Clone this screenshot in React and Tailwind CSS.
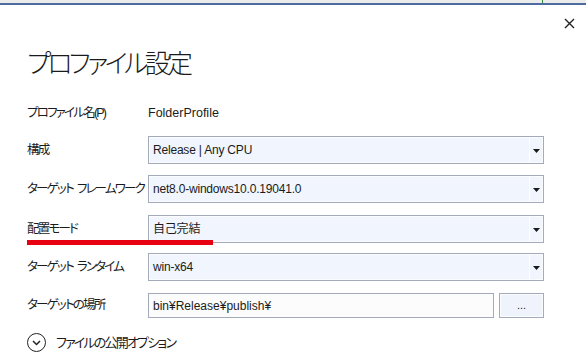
import React from "react";

const jp = "font-['Liberation_Sans','Noto_Sans_CJK_JP',sans-serif] [font-feature-settings:'palt']";

function Arrow() {
  return (
    <svg width="7" height="4" viewBox="0 0 7 4" className="block">
      <path d="M0 0 H7 L3.5 4 Z" fill="#1a1a1a" />
    </svg>
  );
}

function Select({ value }) {
  return (
    <div className="flex h-[28px] w-[396px] items-stretch border border-[#a3abba] bg-[#f1f5fd] shadow-[inset_0_0_0_1px_#fbfcff]">
      <div className="flex flex-1 items-center pl-[4px] text-[12px] tracking-[-0.2px] text-[#1b1b1b]">{value}</div>
      <div className="w-[1px] bg-[#ffffff]" />
      <div className="flex w-[13px] items-center justify-center pt-[1px]">
        <Arrow />
      </div>
    </div>
  );
}

function Sp() {
  return <span className="inline-block w-[4px]" />;
}

function Row({ label, children, className = "" }) {
  return (
    <div className={`relative flex items-center ${className}`}>
      <div className="w-[121px] shrink-0 whitespace-nowrap text-[12.5px] tracking-[-1.8px] text-[#1b1b1b]">{label}</div>
      {children}
    </div>
  );
}

export default function App() {
  return (
    <div className={`relative h-[357px] w-[586px] overflow-hidden bg-white ${jp}`}>
      <div className="relative h-[3px] bg-[#ececec]">
        <div className="absolute left-[542px] top-0 h-[3px] w-[1px] bg-[#2f8a3a]" />
      </div>
      <div className="h-[2px] bg-[#4d6b9f]" />

      <div className="flex justify-end pr-[11px] pt-[13px]">
        <svg width="11" height="11" viewBox="0 0 11 11" className="block">
          <path d="M1 1 L10 10 M10 1 L1 10" stroke="#222" strokeWidth="1.4" />
        </svg>
      </div>

      <div className="pl-[27px]">
        <div className="mt-[18px] whitespace-nowrap text-[26px] font-light leading-[34px] tracking-[-3.6px] text-[#1b1b1b]">
          プロファイル設定
        </div>

        <Row label="プロファイル名(P)" className="mt-[22px] h-[20px]">
          <div className="text-[12.5px] text-[#1b1b1b]">FolderProfile</div>
        </Row>

        <Row label="構成" className="mt-[13px]">
          <Select value="Release | Any CPU" />
        </Row>
        <Row label={<>ターゲット<Sp />フレームワーク</>} className="mt-[11px]">
          <Select value="net8.0-windows10.0.19041.0" />
        </Row>
        <Row label="配置モード" className="mt-[12px]">
          <Select value="自己完結" />
          <div className="absolute left-0 top-[25px] h-[5px] w-[186px] bg-[#e60012]" />
        </Row>
        <Row label={<>ターゲット<Sp />ランタイム</>} className="mt-[10px]">
          <Select value="win-x64" />
        </Row>
        <Row label="ターゲットの場所" className="mt-[12px]">
          <div className="flex h-[25px] w-[346px] items-center border border-[#a3abba] bg-[#fcfcfc] pl-[4px] text-[12px] text-[#1b1b1b]">
            bin¥Release¥publish¥
          </div>
          <div className="ml-[5px] flex h-[25px] w-[45px] items-center justify-center border border-[#a3abba] bg-[#eff3fc] shadow-[inset_0_0_0_1px_#fbfcff] text-[11px] leading-none text-[#1b1b1b]">
            ...
          </div>
        </Row>

        <div className="mt-[15px] flex items-center">
          <div className="flex h-[19px] w-[19px] items-center justify-center rounded-full border-[1.5px] border-[#222]">
            <svg width="9" height="6" viewBox="0 0 9 6" className="block">
              <path d="M1 1 L4.5 4.5 L8 1" fill="none" stroke="#222" strokeWidth="1.5" />
            </svg>
          </div>
          <div className="ml-[10px] whitespace-nowrap text-[13px] tracking-[-1.8px] text-[#1b1b1b]">ファイルの公開オプション</div>
        </div>
      </div>
    </div>
  );
}
